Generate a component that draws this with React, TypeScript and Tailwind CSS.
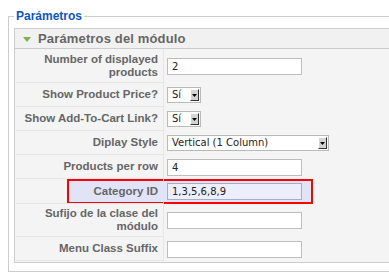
import React from 'react';

const labelFont = { fontFamily: '"Liberation Sans", Arial, sans-serif' };
const valueFont = { fontFamily: '"DejaVu Sans", Verdana, sans-serif' };

function TextBox({ value = '', highlight = false }: { value?: string; highlight?: boolean }) {
  return (
    <div
      className={`w-[135px] h-[17px] border flex items-center pl-[4px] text-[10px] text-[#222] ${
        highlight ? 'bg-[#eceefc] border-[#a9adc3]' : 'bg-white border-[#bdbdbd]'
      }`}
      style={valueFont}
    >
      {value}
    </div>
  );
}

function SelectBox({ value, width }: { value: string; width: string }) {
  return (
    <div
      className={`${width} h-[16px] border border-[#b9b9b9] bg-white flex items-stretch p-[1px] text-[10px] text-[#222]`}
      style={valueFont}
    >
      <span className="flex-1 pl-[3px] leading-[12px]">{value}</span>
      <span className="w-[9px] bg-[#d4d4d4] border-t border-l border-t-white border-l-white border-b border-r border-b-[#333] border-r-[#333] flex items-center justify-center">
        <svg width="5" height="3" viewBox="0 0 5 3">
          <polygon points="0,0 5,0 2.5,3" fill="#000" />
        </svg>
      </span>
    </div>
  );
}

function Row({ label, height, children }: { label: React.ReactNode; height: string; children: React.ReactNode }) {
  return (
    <div className={`flex ${height}`}>
      <div
        className="w-[148px] ml-[1px] border-r border-b border-[#e6e6e6] flex items-center justify-end pr-[5px] text-right text-[11.5px] leading-[13px] font-bold text-[#666]"
        style={labelFont}
      >
        {label}
      </div>
      <div className="flex-1 flex items-center pl-[3px]">{children}</div>
    </div>
  );
}

export default function App() {
  return (
    <div className="w-[389px] h-[280px] bg-white overflow-hidden">
      <fieldset className="ml-[8px] mt-[8px] w-[420px] border border-[#cccccc] pl-[5px] pt-[4px] pb-[8px]">
        <legend
          className="px-[2px] text-[12px] leading-[16px] font-bold text-[#0b55c4]"
          style={labelFont}
        >
          Parámetros
        </legend>

        <div className="border border-[#cccccc] bg-[#f4f4f4] pb-[1px]">
          {/* header */}
          <div className="h-[20px] bg-[#f1f1f1] border-b border-[#cccccc] flex items-center pl-[8px]">
            <svg width="8" height="5" viewBox="0 0 8 5" className="mr-[7px] mt-[2px]">
              <polygon points="0,0 8,0 4,5" fill="#7cb24e" />
            </svg>
            <span className="text-[13px] leading-[19px] font-bold text-[#666] tracking-[0.15px]" style={labelFont}>
              Parámetros del módulo
            </span>
          </div>

          <Row label={<>Number of displayed<br />products</>} height="h-[34px]">
            <TextBox value="2" />
          </Row>
          <Row label="Show Product Price?" height="h-[24px]">
            <SelectBox value="Sí" width="w-[34px]" />
          </Row>
          <Row label="Show Add-To-Cart Link?" height="h-[24px]">
            <SelectBox value="Sí" width="w-[34px]" />
          </Row>
          <Row label="Diplay Style" height="h-[24px]">
            <SelectBox value="Vertical (1 Column)" width="w-[162px]" />
          </Row>
          <Row label="Products per row" height="h-[24px]">
            <TextBox value="4" />
          </Row>

          {/* highlighted row */}
          <div className="relative flex h-[25px]">
            <div className="absolute left-[52px] top-0 w-[246px] h-[25px] border-2 border-[#ff0000] bg-[#e1e4f6]" />
            <div
              className="relative w-[148px] ml-[1px] border-r border-b border-[#e6e6e6] flex items-center justify-end pr-[5px] text-[11.5px] leading-[13px] font-bold text-[#666]"
              style={labelFont}
            >
              Category ID
            </div>
            <div className="relative flex-1 flex items-center pl-[3px]">
              <TextBox value="1,3,5,6,8,9" highlight />
            </div>
          </div>

          <Row label={<>Sufijo de la clase del<br />módulo</>} height="h-[33px]">
            <TextBox />
          </Row>
          <Row label="Menu Class Suffix" height="h-[24px]">
            <TextBox />
          </Row>
        </div>
      </fieldset>
    </div>
  );
}
